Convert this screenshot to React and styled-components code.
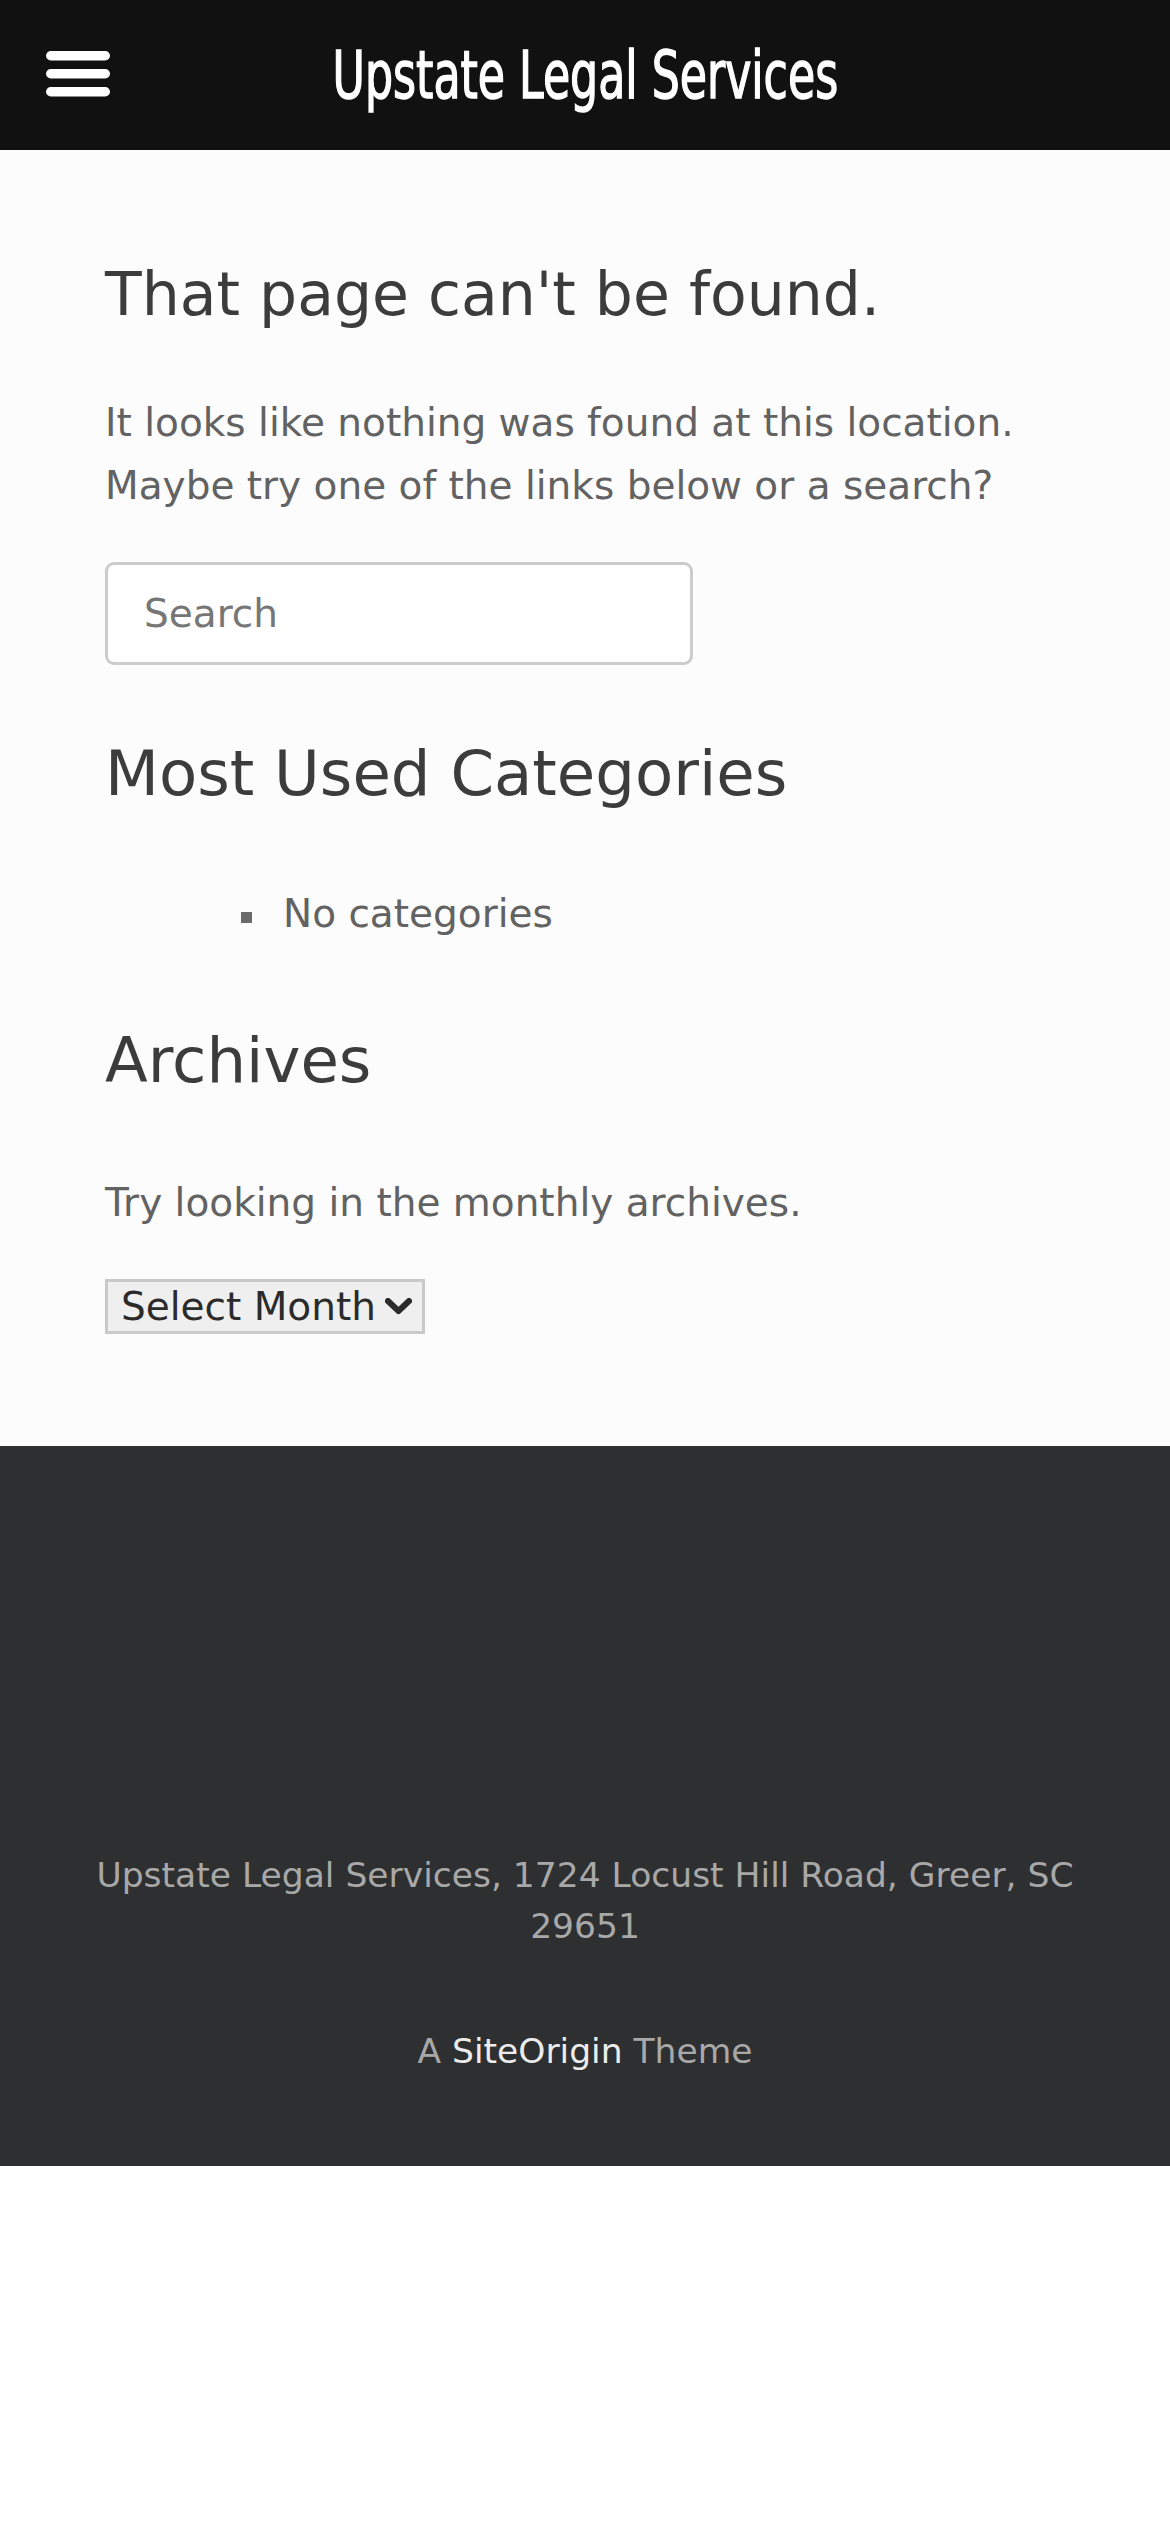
import React from 'react';
import styled, { createGlobalStyle } from 'styled-components';

const GlobalStyle = createGlobalStyle`
  html, body {
    margin: 0;
    padding: 0;
    background: #ffffff;
  }
  body {
    font-family: 'DejaVu Sans', 'Noto Sans', sans-serif;
    -webkit-font-smoothing: antialiased;
  }
  * {
    box-sizing: border-box;
  }
`;

const Masthead = styled.header`
  display: grid;
  grid-template-columns: 1fr auto 1fr;
  align-items: center;
  height: 150px;
  background-color: #111111;
`;

const MenuButton = styled.button`
  justify-self: start;
  display: flex;
  align-items: center;
  margin-left: 46px;
  margin-top: -3px;
  padding: 0;
  border: none;
  background: none;
  cursor: pointer;
`;

const SiteTitle = styled.h1`
  margin: 2px 0 0;
  color: #ffffff;
  font-family: 'DejaVu Sans Condensed', 'DejaVu Sans', sans-serif;
  font-stretch: condensed;
  font-weight: normal;
  font-size: 66px;
  line-height: 1;
  white-space: nowrap;
  -webkit-text-stroke: 1.4px #ffffff;
  transform: scaleX(0.745);
  transform-origin: center;
`;

const Main = styled.main`
  background-color: #fcfcfc;
  padding: 105px 105px 112px;
`;

const PageTitle = styled.h1`
  margin: 0;
  color: #3c3c3c;
  font-size: 60px;
  font-weight: normal;
  line-height: 78px;
`;

const WidgetTitle = styled.h2`
  margin: ${(p) => p.$top}px 0 0;
  color: #3c3c3c;
  font-size: 62.5px;
  font-weight: normal;
  line-height: 78px;
`;

const Text = styled.p`
  margin: ${(p) => p.$top}px 0 0;
  color: #626262;
  font-size: 39px;
  line-height: 63px;
`;

const SearchField = styled.input`
  display: block;
  margin-top: 45px;
  width: 588px;
  height: 103px;
  padding: 0 36px;
  border: 3px solid #cccccc;
  border-radius: 9px;
  background: #ffffff;
  color: #626262;
  font-family: inherit;
  font-size: 39px;
  outline: none;

  &::placeholder {
    color: #767676;
  }
`;

const CategoryList = styled.ul`
  list-style: none;
  margin: 69px 0 0;
  padding: 0 0 0 136px;
`;

const CategoryItem = styled.li`
  color: #626262;
  font-size: 39px;
  line-height: 63px;
`;

const Bullet = styled.span`
  display: inline-block;
  width: 11px;
  height: 11px;
  margin: 0 31px 4px 0;
  background-color: #6a6a6a;
`;

const SelectWrap = styled.div`
  position: relative;
  width: 320px;
  margin-top: 45px;
`;

const MonthSelect = styled.select`
  display: block;
  width: 100%;
  height: 55px;
  padding: 0 0 0 13px;
  border: 3px solid #c9c9c9;
  border-radius: 0;
  background-color: #efefef;
  color: #2b2b2b;
  font-family: inherit;
  font-size: 39px;
  appearance: none;
  -webkit-appearance: none;
`;

const Chevron = styled.svg`
  position: absolute;
  top: 19px;
  right: 13px;
  pointer-events: none;
`;

const Footer = styled.footer`
  background-color: #2e2f31;
  padding: 404px 60px 89px;
  text-align: center;
  color: #a8a8a8;
  font-size: 34.5px;
  line-height: 51px;
`;

const FooterLine = styled.p`
  margin: ${(p) => p.$top || 0}px auto 0;
  max-width: 1010px;
`;

const FooterLink = styled.a`
  color: #ececec;
  text-decoration: none;
`;

const MenuIcon = () => (
  <svg width="64" height="46" viewBox="0 0 64 46" aria-hidden="true">
    <rect x="0" y="0" width="64" height="9.5" rx="4.75" fill="#ffffff" />
    <rect x="0" y="18" width="64" height="9.5" rx="4.75" fill="#ffffff" />
    <rect x="0" y="36" width="64" height="9.5" rx="4.75" fill="#ffffff" />
  </svg>
);

export default function App() {
  return (
    <>
      <GlobalStyle />
      <Masthead>
        <MenuButton aria-label="Menu">
          <MenuIcon />
        </MenuButton>
        <SiteTitle>Upstate Legal Services</SiteTitle>
        <div />
      </Masthead>

      <Main>
        <PageTitle>That page can't be found.</PageTitle>
        <Text $top={58}>
          It looks like nothing was found at this location. Maybe try one of the links below or a search?
        </Text>
        <SearchField type="search" placeholder="Search" />

        <WidgetTitle $top={70}>Most Used Categories</WidgetTitle>
        <CategoryList>
          <CategoryItem>
            <Bullet />
            No categories
          </CategoryItem>
        </CategoryList>

        <WidgetTitle $top={77}>Archives</WidgetTitle>
        <Text $top={71}>Try looking in the monthly archives.</Text>
        <SelectWrap>
          <MonthSelect defaultValue="">
            <option value="">Select Month</option>
          </MonthSelect>
          <Chevron width="27" height="17" viewBox="0 0 27 17">
            <path d="M3 3 L13.5 13 L24 3" fill="none" stroke="#2b2b2b" strokeWidth="6" strokeLinecap="round" strokeLinejoin="round" />
          </Chevron>
        </SelectWrap>
      </Main>

      <Footer>
        <FooterLine>Upstate Legal Services, 1724 Locust Hill Road, Greer, SC 29651</FooterLine>
        <FooterLine $top={74}>
          A <FooterLink href="#">SiteOrigin</FooterLink> Theme
        </FooterLine>
      </Footer>
    </>
  );
}
